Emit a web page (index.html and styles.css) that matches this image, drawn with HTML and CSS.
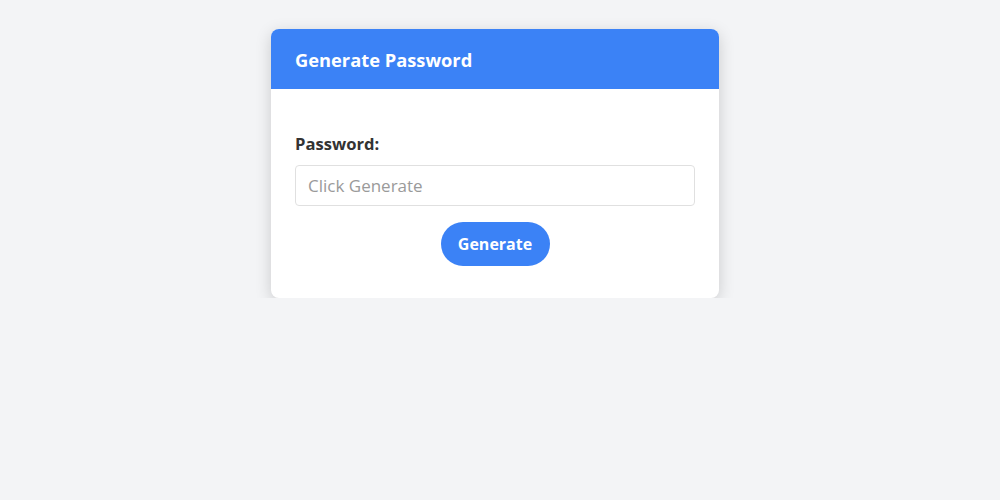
FILE: index.html
```html
<!DOCTYPE html>
<html lang="en">
<head>
<meta charset="utf-8">
<title>Generate Password</title>
<link rel="stylesheet" href="styles.css">
</head>
<body>
<div class="card">
  <div class="card-header">Generate Password</div>
  <div class="card-body">
    <label class="label" for="pw">Password:</label>
    <input class="input" id="pw" type="text" placeholder="Click Generate" readonly>
    <div class="actions">
      <button class="btn" type="button">Generate</button>
    </div>
  </div>
</div>
</body>
</html>
```

FILE: styles.css
```css
* { box-sizing: border-box; }
html, body { margin: 0; padding: 0; }
body {
  background: #f3f4f6;
  font-family: "Open Sans", "Noto Sans", sans-serif;
  padding-top: 29px;
}
.card {
  width: 448px;
  margin: 0 auto 0 271px;
  background: #fff;
  border-radius: 8px;
  box-shadow: 0 4px 16px rgba(0,0,0,0.17);
  overflow: hidden;
}
.card-header {
  background: #3b82f6;
  color: #fff;
  height: 60px;
  padding: 0 24px;
  display: flex;
  align-items: center;
  font-size: 18.3px;
  font-weight: 700;
}
.card-body {
  padding: 43px 24px 32px;
  display: flex;
  flex-direction: column;
}
.label {
  font-size: 16.6px;
  font-weight: 700;
  color: #333333;
  line-height: 24px;
  margin-bottom: 9px;
}
.input {
  height: 41px;
  width: 100%;
  border: 1px solid #e0e0e0;
  border-radius: 4px;
  padding: 0 12px;
  font-family: inherit;
  font-size: 17px;
  color: #333333;
  outline: none;
}
.input::placeholder { color: #9a9a9a; }
.actions {
  display: flex;
  justify-content: center;
  margin-top: 16px;
}
.btn {
  height: 44px;
  width: 109px;
  border: none;
  border-radius: 22px;
  background: #3b82f6;
  color: #fff;
  font-family: inherit;
  font-size: 16px;
  font-weight: 700;
  cursor: pointer;
}
```
